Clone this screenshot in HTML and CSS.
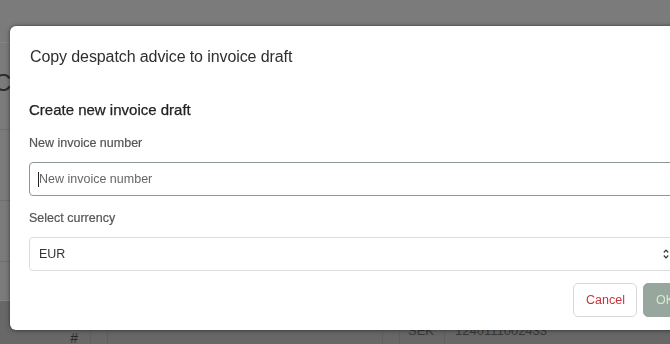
FILE: index.html
```html
<!DOCTYPE html>
<html lang="en">
<head>
<meta charset="utf-8">
<title>Copy despatch advice</title>
<link rel="stylesheet" href="styles.css">
</head>
<body>
<div class="page">
  <div class="page-top"></div>
  <div class="page-row row-a"><span class="big-c">C</span></div>
  <div class="page-row row-b"></div>
  <div class="page-row row-c"></div>
  <div class="page-row row-d"></div>
  <div class="page-bottom">
    <div class="cell cell-1"><span class="hash">#</span></div>
    <div class="cell cell-2"></div>
    <div class="cell cell-3"></div>
    <div class="cell cell-4"></div>
    <div class="cell cell-5">SEK</div>
    <div class="cell cell-6">1240111002433</div>
  </div>
</div>

<div class="modal">
  <div class="modal-header">
    <h1 class="modal-title">Copy despatch advice to invoice draft</h1>
  </div>
  <div class="modal-body">
    <h2 class="section-title">Create new invoice draft</h2>
    <label class="field-label">New invoice number</label>
    <div class="text-input focused"><span class="caret"></span><span class="placeholder">New invoice number</span></div>
    <label class="field-label">Select currency</label>
    <div class="select-input">
      <span class="select-value">EUR</span>
      <svg class="select-arrow" width="6" height="10" viewBox="0 0 6 10"><path d="M0.8 3.5 L3 1.2 L5.2 3.5 M0.8 6.5 L3 8.8 L5.2 6.5" fill="none" stroke="#333" stroke-width="1.2"/></svg>
    </div>
    <div class="modal-footer">
      <button class="btn btn-cancel">Cancel</button>
      <button class="btn btn-ok">OK</button>
    </div>
  </div>
</div>
</body>
</html>
```
FILE: styles.css
```css
html, body {
  margin: 0;
  padding: 0;
}
body {
  width: 670px;
  height: 344px;
  overflow: hidden;
  background: #7b7b7b;
  font-family: "Liberation Sans", Arial, sans-serif;
}
.page {
  display: flex;
  flex-direction: column;
  height: 344px;
}
.page-top {
  height: 42px;
  border-bottom: 1px solid #858585;
}
.page-row {
  border-bottom: 1px solid #6f6f6f;
}
.row-a {
  height: 86px;
  display: flex;
  align-items: center;
}
.big-c {
  font-size: 24px;
  color: #2c2c2c;
  margin-left: -6px;
  margin-top: -6px;
}
.row-b { height: 70px; }
.row-c { height: 60px; }
.row-d { height: 38px; border-bottom-color: #848484; }
.page-bottom {
  flex: 1;
  display: flex;
  background: #686868;
  color: #3a3a3a;
  font-size: 13px;
}
.cell {
  border-right: 1px solid #606060;
  display: flex;
  align-items: flex-end;
}
.cell-1 { width: 91px; justify-content: flex-end; padding-right: 12px; box-sizing: border-box; }
.hash { font-size: 14px; color: #2a2a2a; line-height: 12px; }
.cell-2 { width: 16px; }
.cell-3 { width: 274px; }
.cell-4 { width: 16px; }
.cell-5 { width: 36px; padding-left: 8px; padding-bottom: 6px; }
.cell-6 { border-right: none; padding-left: 10px; padding-bottom: 6px; }

.modal {
  position: fixed;
  left: 10px;
  top: 26px;
  width: 690px;
  height: 304px;
  background: #fff;
  border-radius: 6px;
  box-shadow: 0 0 3px rgba(0,0,0,0.45), 0 1px 6px rgba(0,0,0,0.25);
  box-sizing: border-box;
}
.modal-header {
  padding: 20px 20px;
  height: 62px;
  box-sizing: border-box;
}
.modal-title {
  margin: 0;
  font-size: 16px;
  line-height: 22px;
  font-weight: normal;
  color: #2e2e2e;
  letter-spacing: -0.1px;
}
.modal-body {
  padding: 12px 19px 13px 19px;
  display: flex;
  flex-direction: column;
}
.section-title {
  margin: 0 0 14px 0;
  font-size: 15px;
  line-height: 20px;
  font-weight: normal;
  color: #222;
  -webkit-text-stroke: 0.25px #222;
}
.field-label {
  font-size: 12.5px;
  line-height: 18px;
  color: #555;
  margin-bottom: 10px;
  -webkit-text-stroke: 0.2px #555;
}
.text-input, .select-input {
  height: 34px;
  box-sizing: border-box;
  border-radius: 4px;
  display: flex;
  align-items: center;
  font-size: 12.5px;
  padding-left: 9px;
}
.text-input {
  border: 1.5px solid #8b9995;
  margin-bottom: 13px;
  padding-left: 8px;
}
.caret {
  width: 1px;
  height: 15px;
  background: #222;
}
.placeholder { color: #666; }
.select-input {
  border: 1px solid #dcdcdc;
  justify-content: space-between;
  padding-right: 11px;
  color: #333;
}
.select-arrow { display: block; }
.modal-footer {
  display: flex;
  justify-content: flex-end;
  gap: 6px;
  margin-top: 12px;
}
.btn {
  height: 34px;
  border-radius: 5px;
  font-family: "Liberation Sans", Arial, sans-serif;
  font-size: 12.5px;
  padding: 0 12px;
  cursor: pointer;
}
.btn-cancel {
  width: 64px;
  background: #fff;
  border: 1px solid #d8d8d8;
  color: #c8343e;
}
.btn-ok {
  width: 38px;
  background: #98a79d;
  border: 1px solid #98a79d;
  color: #d4ecc9;
}
```
